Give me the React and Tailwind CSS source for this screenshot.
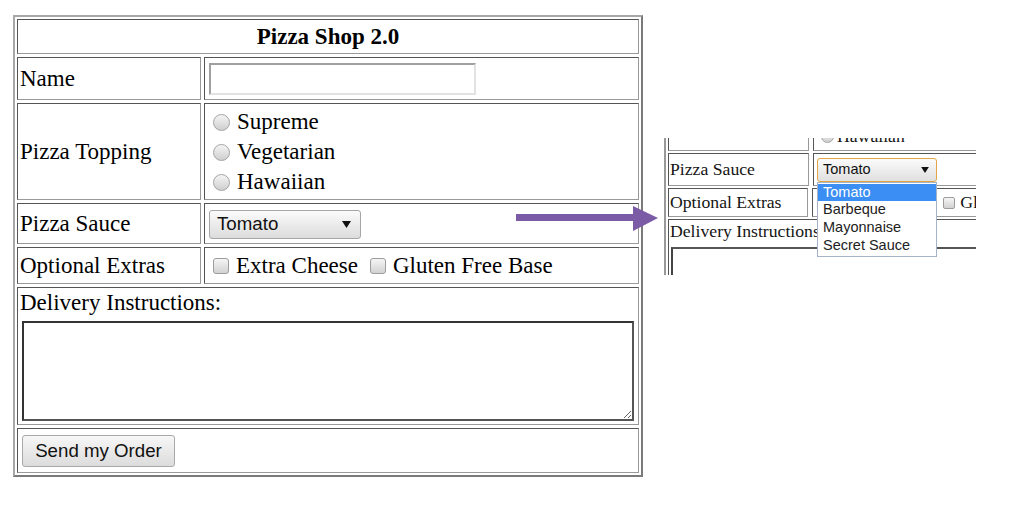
import React from "react";

const serif = "font-['Liberation_Serif','Times_New_Roman',serif]";
const sans = "font-['Liberation_Sans',Arial,sans-serif]";
const cellB =
  "border border-t-[#555] border-l-[#555] border-b-[#999] border-r-[#999]";

function Cell({ className = "", children }) {
  return <div className={`${cellB} ${className}`}>{children}</div>;
}

function Radio({ small }) {
  return (
    <div
      className={`${
        small ? "w-[13px] h-[13px]" : "w-[17px] h-[17px]"
      } shrink-0 rounded-full border border-[#a3a3a3] bg-linear-to-b from-[#f5f5f5] to-[#cfcfcf]`}
    />
  );
}

function Check({ small }) {
  return (
    <div
      className={`${
        small ? "w-[12px] h-[12px] rounded-[2px]" : "w-[16px] h-[16px] rounded-[3px]"
      } shrink-0 border border-[#9c9c9c] bg-linear-to-b from-[#f5f5f5] to-[#d2d2d2]`}
    />
  );
}

function Tri({ w = 9, h = 7 }) {
  return (
    <svg width={w} height={h} viewBox="0 0 9 7" className="shrink-0">
      <path d="M0 0 L9 0 L4.5 7 Z" fill="#111" />
    </svg>
  );
}

function MainTable() {
  return (
    <div
      className={`${serif} text-[23px] text-black w-[630px] h-[462px] border-2 border-t-[#a8a8a8] border-l-[#a8a8a8] border-b-[#7a7a7a] border-r-[#7a7a7a] p-[2px] flex flex-col gap-[3px] whitespace-nowrap`}
    >
      <Cell className="h-[35px] flex items-center justify-center font-bold pt-[1px]">
        Pizza Shop 2.0
      </Cell>
      <div className="flex gap-[3px] h-[43px]">
        <Cell className="w-[184px] flex items-center pl-[2px] pt-[1px]">Name</Cell>
        <Cell className="flex-1 flex items-center pl-[4px]">
          <input
            type="text"
            className="w-[267px] h-[32px] border-2 border-t-[#a0a0a0] border-l-[#a0a0a0] border-b-[#e2e2e2] border-r-[#e2e2e2] bg-white outline-none"
          />
        </Cell>
      </div>
      <div className="flex gap-[3px] h-[97px]">
        <Cell className="w-[184px] flex items-center pl-[2px] pt-[1px]">Pizza Topping</Cell>
        <Cell className="flex-1 flex flex-col justify-center pl-[8px] pt-[1px]">
          {["Supreme", "Vegetarian", "Hawaiian"].map((t) => (
            <div key={t} className="h-[30px] flex items-center gap-[7px]">
              <Radio />
              <span>{t}</span>
            </div>
          ))}
        </Cell>
      </div>
      <div className="flex gap-[3px] h-[41px]">
        <Cell className="w-[184px] flex items-center pl-[2px] pt-[1px]">Pizza Sauce</Cell>
        <Cell className="flex-1 flex items-center pl-[4px] pt-[1px]">
          <div
            className={`${sans} text-[18.7px] text-[#111] w-[152px] h-[29px] rounded-[3px] border border-[#a6a6a6] bg-linear-to-b from-[#fbfbfb] to-[#dcdcdc] flex items-center justify-between pl-[7px] pr-[9px]`}
          >
            <span>Tomato</span>
            <Tri />
          </div>
        </Cell>
      </div>
      <div className="flex gap-[3px] h-[37px]">
        <Cell className="w-[184px] flex items-center pl-[2px] pt-[1px]">Optional Extras</Cell>
        <Cell className="flex-1 flex items-center pl-[8px] pt-[1px]">
          <Check />
          <span className="ml-[7px]">Extra Cheese</span>
          <div className="ml-[12px]">
            <Check />
          </div>
          <span className="ml-[7px]">Gluten Free Base</span>
        </Cell>
      </div>
      <Cell className="h-[138px] flex flex-col px-[2px]">
        <div className="h-[28px] flex items-center pt-[3px]">Delivery Instructions:</div>
        <textarea
          className="mt-[5px] ml-[2px] w-[612px] h-[100px] border-2 border-t-[#333] border-l-[#333] border-b-[#555] border-r-[#555] bg-white outline-none resize"
        />
      </Cell>
      <Cell className="h-[45px] flex items-center pl-[4px] pt-[1px]">
        <button
          className={`${sans} text-[18.7px] text-[#111] w-[153px] h-[32px] rounded-[3px] border border-[#a9a9a9] bg-linear-to-b from-[#f7f7f7] to-[#dcdcdc] flex items-center justify-center`}
        >
          Send my Order
        </button>
      </Cell>
    </div>
  );
}

function Inset() {
  return (
    <div className="relative w-[313px] h-[137px] overflow-hidden bg-white">
      <div
        className={`${serif} text-[17.7px] text-[#151515] whitespace-nowrap ml-[1px] mt-[-25px] w-[420px] border-l-2 border-l-[#999] pl-[2px] flex flex-col gap-[2px]`}
      >
        <div className="flex gap-[4px] h-[38px]">
          <Cell className="w-[141px]" />
          <Cell className="flex-1 flex flex-col justify-end pl-[7px] pb-[4px]">
            <div className="h-[20px] flex items-center gap-[3px]">
              <Radio small />
              <span>Hawaiian</span>
            </div>
          </Cell>
        </div>
        <div className="flex gap-[4px] h-[33px]">
          <Cell className="w-[141px] flex items-center pl-[1px]">Pizza Sauce</Cell>
          <Cell className="flex-1 flex items-center pl-[3px]">
            <div
              className={`${sans} text-[14.5px] text-[#111] w-[120px] h-[24px] rounded-[3px] border border-[#e3a646] bg-linear-to-b from-[#fbfbfb] to-[#e0e0e0] flex items-center justify-between pl-[5px] pr-[7px]`}
            >
              <span>Tomato</span>
              <Tri w={8} h={6} />
            </div>
          </Cell>
        </div>
        <div className="flex gap-[4px] h-[29px]">
          <Cell className="w-[141px] flex items-center pl-[1px]">Optional Extras</Cell>
          <Cell className="flex-1 flex items-center pl-[5px]">
            <Check small />
            <span className="ml-[6px]">Extra Cheese</span>
            <div className="ml-[13px]">
              <Check small />
            </div>
            <span className="ml-[5px]">Gluten Free Base</span>
          </Cell>
        </div>
        <Cell className="h-[120px] flex flex-col pl-[1px]">
          <div className="h-[23px] flex items-center">Delivery Instructions:</div>
          <div className="mt-[4px] ml-[1px] w-[400px] h-[100px] border-t-2 border-l-2 border-t-[#555] border-l-[#444]" />
        </Cell>
      </div>
      <div
        className={`${sans} absolute left-[154px] top-[44px] w-[120px] border border-[#a4b3c8] bg-white text-[14.5px] text-[#222] py-[1px] whitespace-nowrap`}
      >
        <div className="h-[17px] flex items-center pl-[5px] bg-[#3b8ef3] text-white">Tomato</div>
        <div className="h-[18px] flex items-center pl-[5px]">Barbeque</div>
        <div className="h-[18px] flex items-center pl-[5px]">Mayonnaise</div>
        <div className="h-[18px] flex items-center pl-[5px]">Secret Sauce</div>
      </div>
    </div>
  );
}

export default function App() {
  return (
    <div className="relative w-[1024px] h-[505px] bg-white flex items-start overflow-hidden">
      <div className="ml-[13px] mt-[15px] shrink-0">
        <MainTable />
      </div>
      <div className="ml-[20px] mt-[138px] shrink-0">
        <Inset />
      </div>
      <svg
        className="absolute left-[516px] top-[204px]"
        width="144"
        height="30"
        viewBox="0 0 144 30"
      >
        <rect x="0" y="10" width="120" height="7" fill="#7b5ba6" />
        <path d="M117 2 L142 14 L117 27 Z" fill="#7b5ba6" />
      </svg>
    </div>
  );
}
